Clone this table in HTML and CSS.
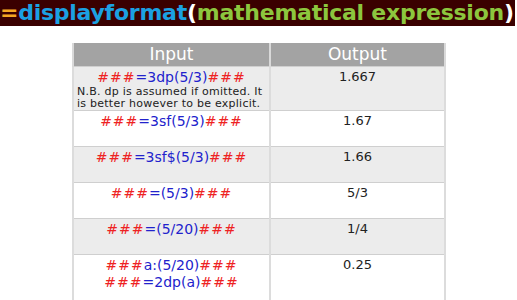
FILE: index.html
```html
<!DOCTYPE html>
<html>
<head>
<meta charset="utf-8">
<link rel="stylesheet" href="styles.css">
</head>
<body>
<h1 class="title"><span class="eq">=</span><span class="fn">displayformat</span><span class="par">(</span><span class="arg">mathematical expression</span><span class="par">)</span></h1>
<table class="grid">
  <colgroup><col class="c-in"><col class="c-out"></colgroup>
  <thead>
    <tr><th>Input</th><th>Output</th></tr>
  </thead>
  <tbody>
    <tr class="odd r1">
      <td><div class="code"><span class="h">###</span>=3dp(5/3)<span class="h">###</span></div>
        <div class="note">N.B. dp is assumed if omitted. It is better however to be explicit.</div></td>
      <td>1.667</td>
    </tr>
    <tr class="even">
      <td><div class="code"><span class="h">###</span>=3sf(5/3)<span class="h">###</span></div></td>
      <td>1.67</td>
    </tr>
    <tr class="odd">
      <td><div class="code"><span class="h">###</span>=3sf$(5/3)<span class="h">###</span></div></td>
      <td>1.66</td>
    </tr>
    <tr class="even">
      <td><div class="code"><span class="h">###</span>=(5/3)<span class="h">###</span></div></td>
      <td>5/3</td>
    </tr>
    <tr class="odd">
      <td><div class="code"><span class="h">###</span>=(5/20)<span class="h">###</span></div></td>
      <td>1/4</td>
    </tr>
    <tr class="even r6">
      <td><div class="code"><span class="h">###</span>a:(5/20)<span class="h">###</span></div>
        <div class="code"><span class="h">###</span>=2dp(a)<span class="h">###</span></div></td>
      <td>0.25</td>
    </tr>
  </tbody>
</table>
</body>
</html>
```
FILE: styles.css
```css
html, body {
  margin: 0;
  padding: 0;
  background: #ffffff;
}
body {
  font-family: "DejaVu Sans", Verdana, sans-serif;
  width: 517px;
  height: 300px;
  overflow: hidden;
}
.title {
  margin: 0;
  width: 515px;
  height: 26px;
  background: #3a0000;
  font-size: 22px;
  font-weight: bold;
  line-height: 25px;
  white-space: nowrap;
  overflow: hidden;
  letter-spacing: -0.25px;
}
.eq { color: #f5a623; }
.fn { color: #1ba1e2; }
.par { color: #ffffff; }
.arg { color: #8cc63e; }

.grid {
  margin: 17px 0 0 72px;
  border-collapse: collapse;
  table-layout: fixed;
  width: 372px;
}
.c-in { width: 197px; }
.c-out { width: 175px; }
.grid th {
  background: #a3a3a3;
  color: #ffffff;
  font-weight: normal;
  font-size: 17px;
  height: 23px;
  padding: 0;
  line-height: 23px;
  border-left: 2px solid #d9d9d9;
  border-right: 2px solid #d9d9d9;
}
.grid td {
  vertical-align: top;
  text-align: center;
  padding: 2px 3px 0;
  height: 33px;
  border: 2px solid #dcdcdc;
  border-top: 1px solid #cfcfcf;
  border-bottom: 1px solid #cfcfcf;
  font-size: 13px;
  color: #222222;
  line-height: 16px;
}
.odd td { background: #ececec; }
.even td { background: #ffffff; }
.r1 td { height: 41px; }
.r6 td { height: 50px; }
.code {
  color: #2222cc;
  font-size: 14px;
  line-height: 17px;
}
.h { color: #ee2222; letter-spacing: 1px; }
.note {
  text-align: left;
  font-size: 11px;
  line-height: 12px;
  letter-spacing: 0.25px;
  color: #222222;
}
```
